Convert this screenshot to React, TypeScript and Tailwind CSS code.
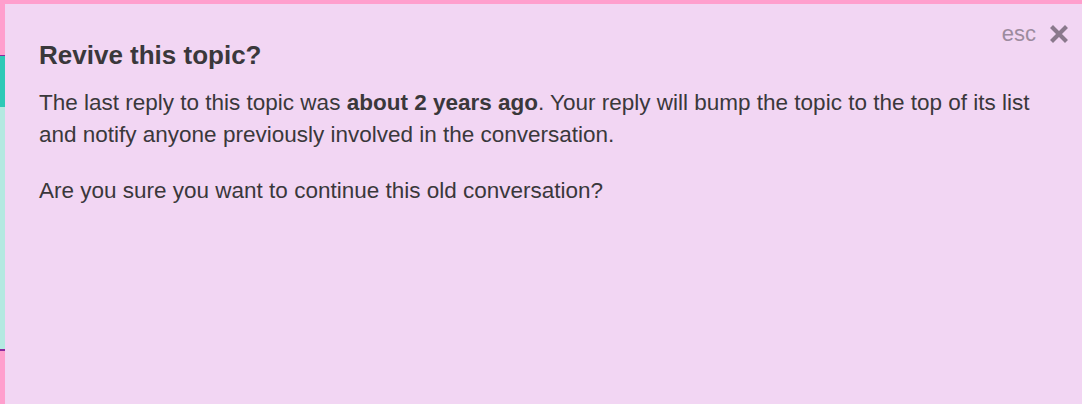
export default function App() {
  return (
    <div className="w-[1082px] h-[404px] bg-[#ff9fcd] flex flex-col overflow-hidden font-['Liberation_Sans',Arial,sans-serif]">
      <div className="h-[4px] shrink-0"></div>
      <div className="flex flex-1 min-h-0">
        {/* left edge of the page behind the modal */}
        <div className="w-[5px] shrink-0 flex flex-col">
          <div className="h-[51px] shrink-0"></div>
          <div className="h-[1px] bg-[#8c2a9e] shrink-0"></div>
          <div className="h-[51px] bg-[#2ec9b7] shrink-0"></div>
          <div className="h-[242px] bg-[#b4e9e1] shrink-0"></div>
          <div className="h-[2px] bg-[#8c2a9e] shrink-0"></div>
          <div className="flex-1"></div>
        </div>
        <div className="flex-1 bg-[#f2d6f3] relative px-[34px] pt-[35px] text-[#3a383b]">
          <div className="absolute right-[14px] top-[16px] flex items-center gap-[14px] text-[#9c8b9e]">
            <span className="text-[22px] leading-[28px]">esc</span>
            <svg width="18" height="18" viewBox="0 0 18 18" className="text-[#8a798c]">
              <path d="M3 3 L15 15 M15 3 L3 15" stroke="currentColor" strokeWidth="4.2" strokeLinecap="square" />
            </svg>
          </div>
          <h3 className="text-[26px] font-bold leading-[32px]">Revive this topic?</h3>
          <div className="mt-[16px] text-[22.5px] leading-[32px]">
            <p>
              The last reply to this topic was <b>about 2 years ago</b>. Your reply will bump the topic to the top of its list and notify anyone previously involved in the conversation.
            </p>
            <p className="mt-[24px]">Are you sure you want to continue this old conversation?</p>
          </div>
        </div>
      </div>
    </div>
  );
}
